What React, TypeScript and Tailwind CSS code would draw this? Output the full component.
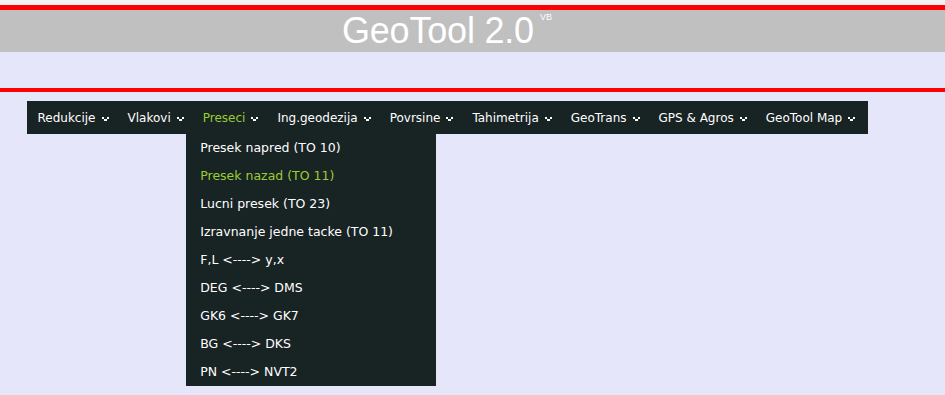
const navItems = [
  "Redukcije",
  "Vlakovi",
  "Preseci",
  "Ing.geodezija",
  "Povrsine",
  "Tahimetrija",
  "GeoTrans",
  "GPS & Agros",
  "GeoTool Map",
];

const subItems = [
  "Presek napred (TO 10)",
  "Presek nazad (TO 11)",
  "Lucni presek (TO 23)",
  "Izravnanje jedne tacke (TO 11)",
  "F,L <----> y,x",
  "DEG <----> DMS",
  "GK6 <----> GK7",
  "BG <----> DKS",
  "PN <----> NVT2",
];

function Arrow() {
  return (
    <svg width="7" height="4" viewBox="0 0 7 4" className="ml-[6px] mt-[2px]">
      <rect x="0" y="0" width="2" height="2" fill="#fff" />
      <rect x="5" y="0" width="2" height="2" fill="#fff" />
      <rect x="2" y="2" width="3" height="2" fill="#fff" />
    </svg>
  );
}

export default function App() {
  return (
    <div className="min-h-[395px] bg-[#e6e6fa] font-['DejaVu_Sans',sans-serif]">
      <div className="h-[5px] bg-[#f2f2f2]" />
      <div className="h-[5px] bg-[#ff0000]" />
      <div className="flex h-[42px] bg-[#c0c0c0] pl-[342px]">
        <span className="font-['Liberation_Sans',Arial,sans-serif] text-[36px] leading-[42px] text-white tracking-[-0.2px]">
          GeoTool 2.0
        </span>
        <span className="ml-[6px] mt-[2px] font-['Liberation_Sans',Arial,sans-serif] text-[9px] leading-[10px] text-white">
          VB
        </span>
      </div>
      <div className="h-[36px]" />
      <div className="h-[4px] bg-[#ff0000]" />
      <nav className="ml-[27px] mt-[9px] inline-flex h-[33px] items-center bg-[#182324] pl-[1px] pr-[3px]">
        {navItems.map((item) => {
          const active = item === "Preseci";
          return (
            <div key={item} className="relative flex h-full items-center px-[9.5px]">
              <span className={`text-[12px] ${active ? "text-[#9acd32]" : "text-white"}`}>{item}</span>
              <Arrow />
              {active && (
                <ul className="absolute left-[-7px] top-[33px] w-[250px] bg-[#182324]">
                  {subItems.map((sub, i) => (
                    <li
                      key={sub}
                      className={`flex h-[28px] items-center pl-[14px] text-[12.5px] ${i === 1 ? "text-[#9acd32]" : "text-white"}`}
                    >
                      {sub}
                    </li>
                  ))}
                </ul>
              )}
            </div>
          );
        })}
      </nav>
    </div>
  );
}
